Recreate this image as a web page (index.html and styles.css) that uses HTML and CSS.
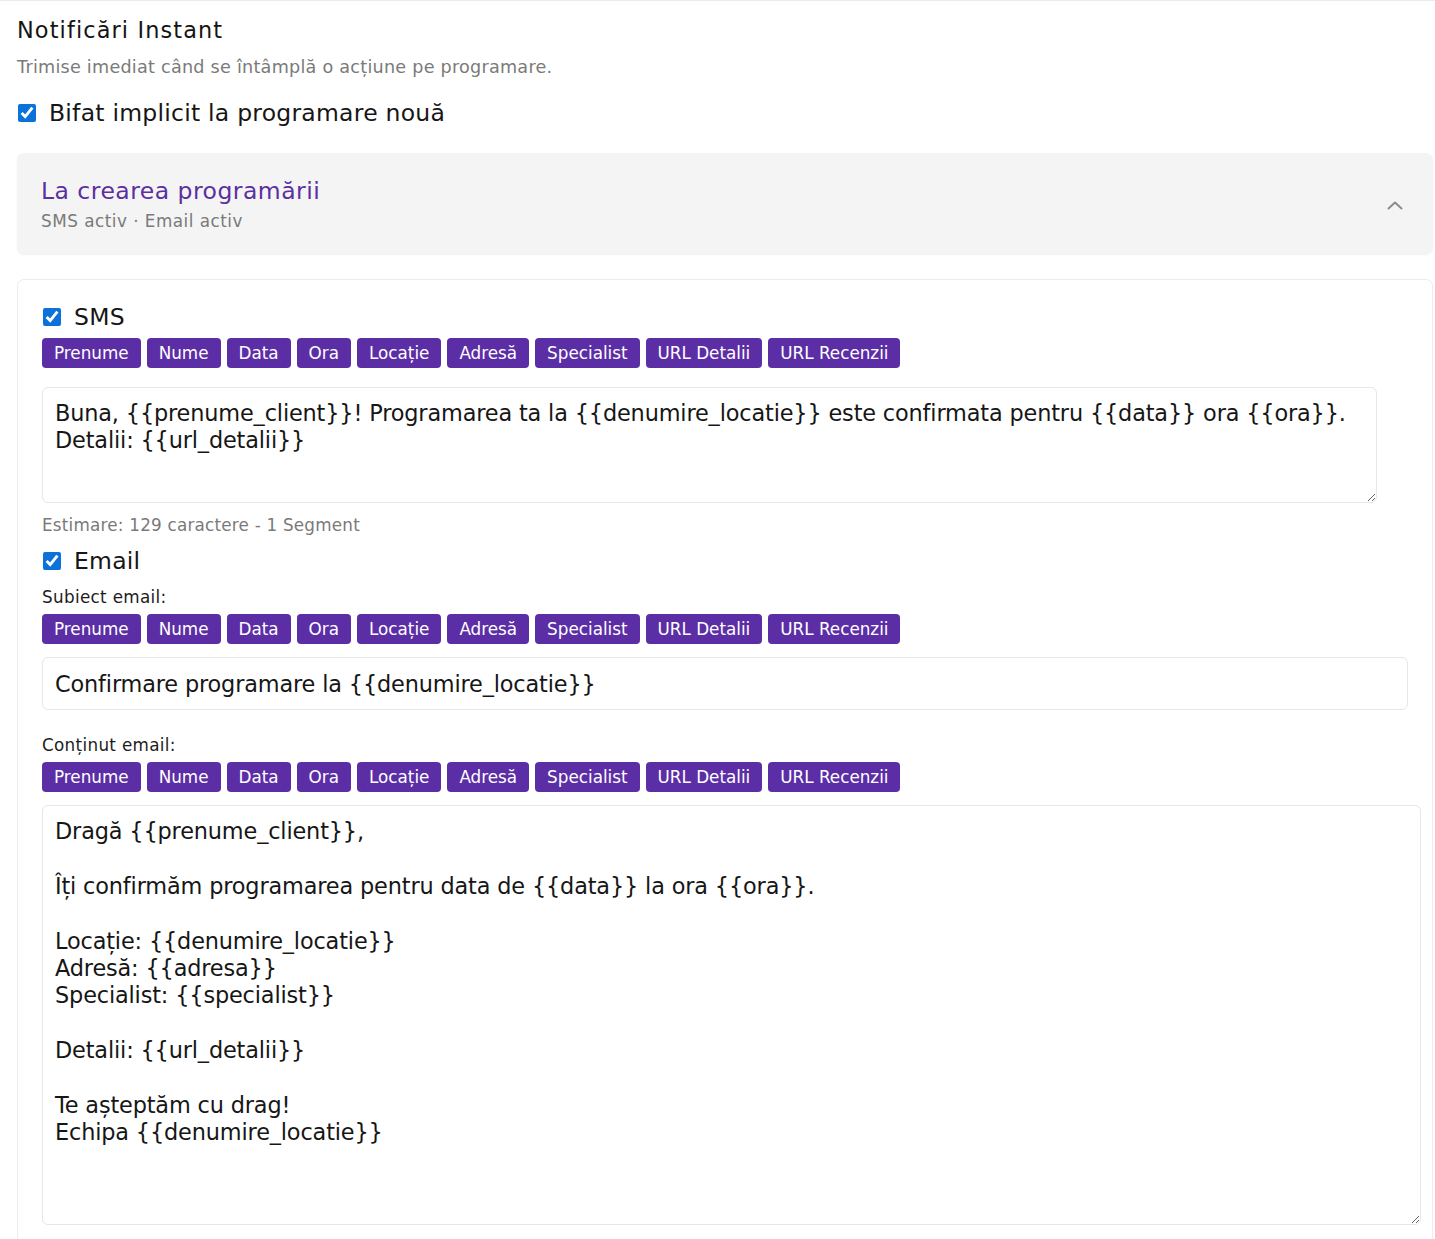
FILE: index.html
```html
<!DOCTYPE html>
<html lang="ro">
<head>
<meta charset="utf-8">
<title>Notificări Instant</title>
<link rel="stylesheet" href="styles.css">
</head>
<body>
<div class="page">
  <h2 class="title">Notificări Instant</h2>
  <p class="subtitle">Trimise imediat când se întâmplă o acțiune pe programare.</p>
  <label class="check big">
    <input type="checkbox" checked>
    <span>Bifat implicit la programare nouă</span>
  </label>

  <div class="acc-head">
    <div class="acc-text">
      <div class="acc-title">La crearea programării</div>
      <div class="acc-sub">SMS activ · Email activ</div>
    </div>
    <svg class="chev" width="16" height="10" viewBox="0 0 16 10"><polyline points="1.5,8.5 8,2.5 14.5,8.5" fill="none" stroke="#8c8c8c" stroke-width="2" stroke-linecap="round" stroke-linejoin="round"/></svg>
  </div>

  <div class="panel">
    <label class="check big">
      <input type="checkbox" checked>
      <span>SMS</span>
    </label>
    <div class="chips">
      <span class="chip">Prenume</span><span class="chip">Nume</span><span class="chip">Data</span><span class="chip">Ora</span><span class="chip">Locație</span><span class="chip">Adresă</span><span class="chip">Specialist</span><span class="chip">URL Detalii</span><span class="chip">URL Recenzii</span>
    </div>
    <textarea class="field sms-area">Buna, {{prenume_client}}! Programarea ta la {{denumire_locatie}} este confirmata pentru {{data}} ora {{ora}}. Detalii: {{url_detalii}}</textarea>
    <p class="hint">Estimare: 129 caractere - 1 Segment</p>

    <label class="check big email-check">
      <input type="checkbox" checked>
      <span>Email</span>
    </label>
    <p class="label">Subiect email:</p>
    <div class="chips">
      <span class="chip">Prenume</span><span class="chip">Nume</span><span class="chip">Data</span><span class="chip">Ora</span><span class="chip">Locație</span><span class="chip">Adresă</span><span class="chip">Specialist</span><span class="chip">URL Detalii</span><span class="chip">URL Recenzii</span>
    </div>
    <input class="field subject" type="text" value="Confirmare programare la {{denumire_locatie}}">

    <p class="label content-label">Conținut email:</p>
    <div class="chips">
      <span class="chip">Prenume</span><span class="chip">Nume</span><span class="chip">Data</span><span class="chip">Ora</span><span class="chip">Locație</span><span class="chip">Adresă</span><span class="chip">Specialist</span><span class="chip">URL Detalii</span><span class="chip">URL Recenzii</span>
    </div>
    <textarea class="field body-area">Dragă {{prenume_client}},

Îți confirmăm programarea pentru data de {{data}} la ora {{ora}}.

Locație: {{denumire_locatie}}
Adresă: {{adresa}}
Specialist: {{specialist}}

Detalii: {{url_detalii}}

Te așteptăm cu drag!
Echipa {{denumire_locatie}}</textarea>
  </div>
</div>
</body>
</html>
```

FILE: styles.css
```css
* { box-sizing: border-box; }

html, body {
  margin: 0;
  padding: 0;
  background: #ffffff;
}

body {
  font-family: "DejaVu Sans", "Open Sans", sans-serif;
  color: #161616;
  letter-spacing: 0.02em;
}

.page {
  border-top: 1px solid #ebebeb;
  padding: 0 2px 0 17px;
}

.title {
  margin: 16px 0 0;
  font-size: 22.4px;
  line-height: 27px;
  font-weight: 400;
  color: #141414;
  letter-spacing: 0.05em;
}

.subtitle {
  margin: 12px 0 0;
  font-size: 17.6px;
  line-height: 22px;
  color: #7a7a7a;
  letter-spacing: 0.014em;
}

.check {
  display: flex;
  align-items: center;
  gap: 13px;
}

.check input {
  margin: 0 0 0 1px;
  width: 18px;
  height: 18px;
  accent-color: #0b72d9;
}

.check.big span {
  font-size: 23.5px;
  line-height: 30px;
  letter-spacing: 0.01em;
}

.page > .check {
  margin-top: 20px;
}

.acc-head {
  margin-top: 25px;
  background: #f4f4f4;
  border-radius: 7px;
  box-shadow: 0 1px 2px rgba(0, 0, 0, 0.06);
  padding: 23px 30px 22px 24px;
  display: flex;
  align-items: center;
  justify-content: space-between;
}

.acc-title {
  font-size: 23.5px;
  line-height: 30px;
  color: #5b2fa0;
  letter-spacing: 0.02em;
}

.acc-sub {
  margin-top: 4px;
  font-size: 16.8px;
  line-height: 22px;
  color: #7a7a7a;
  letter-spacing: 0.03em;
}

.chev {
  display: block;
  margin-top: 1px;
}

.panel {
  margin-top: 25px;
  border: 1px solid #ececec;
  border-radius: 7px;
  padding: 22px 10px 30px 24px;
}

.chips {
  display: flex;
  flex-wrap: wrap;
  gap: 6px;
  margin-top: 6px;
}

.chip {
  background: #5c2ea6;
  color: #ffffff;
  font-size: 16.8px;
  line-height: 30px;
  height: 30px;
  padding: 0 12px;
  border-radius: 4px;
  letter-spacing: 0;
}

.field {
  display: block;
  font-family: inherit;
  letter-spacing: -0.15px;
  font-size: 22.4px;
  line-height: 27.4px;
  color: #161616;
  border: 1px solid #e6e6e6;
  border-radius: 6px;
  background: #ffffff;
  padding: 12px;
  margin: 0;
  outline: none;
}

.sms-area {
  width: 1335px;
  height: 116px;
  margin-top: 19px;
}

.hint {
  margin: 11px 0 0;
  font-size: 16.8px;
  line-height: 22px;
  color: #7a7a7a;
  letter-spacing: 0.013em;
}

.email-check {
  margin-top: 10px;
}

.label {
  margin: 10px 0 0;
  font-size: 16.8px;
  line-height: 22px;
  color: #1c1c1c;
}

.subject {
  width: 1366px;
  height: 53px;
  padding: 0 12px;
  margin-top: 13px;
}

.content-label {
  margin-top: 24px;
}

.body-area {
  width: 1379px;
  height: 420px;
  margin-top: 13px;
}
```
